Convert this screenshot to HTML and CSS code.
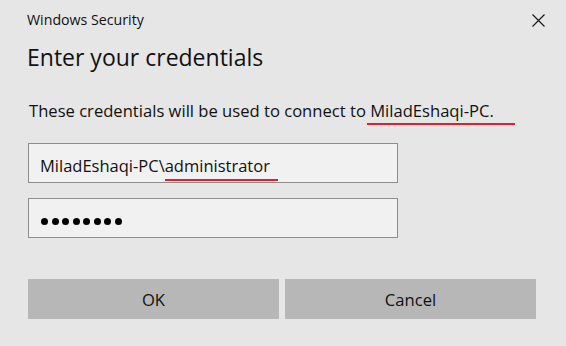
FILE: index.html
```html
<!DOCTYPE html>
<html lang="en">
<head>
  <meta charset="UTF-8" />
  <meta name="viewport" content="width=device-width, initial-scale=1.0" />
  <title>Windows Security</title>
  <link rel="stylesheet" href="styles.css">
</head>
<body>
  <div class="dialog">
    <div class="titlebar">
      <span class="title">Windows Security</span>
      <span class="close">
        <svg width="13" height="13" viewBox="0 0 13 13">
          <path d="M0.5 0.5 L12.5 12.5 M12.5 0.5 L0.5 12.5" stroke="#1a1a1a" stroke-width="1.2" fill="none" />
        </svg>
      </span>
    </div>

    <h1 class="heading">Enter your credentials</h1>

    <p class="message">These credentials will be used to connect to <span class="mark mark-host">MiladEshaqi-PC.</span></p>

    <div class="field">MiladEshaqi-PC\<span class="mark mark-user">administrator</span></div>
    <div class="field field-password">
      <i class="dot"></i><i class="dot"></i><i class="dot"></i><i class="dot"></i>
      <i class="dot"></i><i class="dot"></i><i class="dot"></i><i class="dot"></i>
    </div>

    <div class="buttons">
      <button class="btn">OK</button>
      <button class="btn">Cancel</button>
    </div>
  </div>
</body>
</html>
```

FILE: styles.css
```css
* {
  box-sizing: border-box;
}
body {
  margin: 0;
  padding: 0;
  background: #e6e6e6;
  font-family: "Open Sans", "Noto Sans", sans-serif;
  color: #000;
}
.dialog {
  width: 566px;
  height: 346px;
  padding: 6px 21px 0 27px;
  display: flex;
  flex-direction: column;
}
.titlebar {
  display: flex;
  justify-content: space-between;
  align-items: center;
  height: 26px;
}
.title {
  font-size: 14.2px;
  color: #111;
}
.close {
  display: flex;
  margin-top: 2px;
}
.heading {
  margin: 9px 0 0;
  font-size: 23px;
  font-weight: normal;
  color: #111;
}
.message {
  margin: 26px 0 0 2px;
  font-size: 16.6px;
  color: #111;
}
.mark {
  display: inline-block;
  border-bottom: 2px solid #d8242c;
  line-height: 21px;
}
.mark-host {
  margin-left: -3px;
  padding: 0 21px 2px 3px;
}
.mark-user {
  padding: 0 8px 3px 0;
}
.field {
  width: 370px;
  height: 40px;
  margin: 18px 0 0 1px;
  padding: 6px 11px 0;
  background: #f1f1f1;
  border: 1px solid #8e8e8e;
  font-size: 16.5px;
  line-height: 32px;
  color: #111;
}
.field + .field {
  margin-top: 15px;
}
.field-password {
  display: flex;
  align-items: center;
  gap: 3.5px;
  padding: 6px 0 0 12px;
}
.dot {
  width: 7px;
  height: 7px;
  border-radius: 50%;
  background: #000;
}
.buttons {
  display: flex;
  gap: 6px;
  width: 508px;
  margin: 41px 0 0 1px;
}
.btn {
  flex: 1;
  height: 40px;
  border: none;
  background: #b7b7b7;
  font-family: inherit;
  font-size: 16.6px;
  color: #111;
}
```
